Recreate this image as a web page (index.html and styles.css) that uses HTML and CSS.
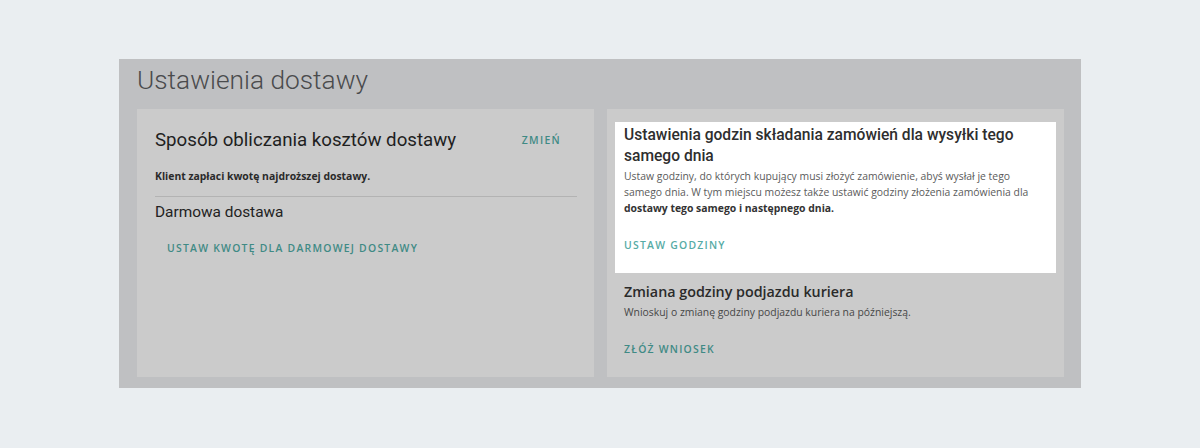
FILE: index.html
```html
<!DOCTYPE html>
<html lang="pl">
<head>
    <meta charset="UTF-8">
    <meta name="viewport" content="width=device-width, initial-scale=1.0">
    <title>Ustawienia dostawy</title>
    <link rel="stylesheet" href="styles.css">
</head>
<body>
    <div class="settings">
        <h1 class="page-title">Ustawienia dostawy</h1>
        <div class="cards">
            <div class="card card-left">
                <div class="card-head">
                    <h2 class="card-title">Sposób obliczania kosztów dostawy</h2>
                    <button class="link-btn link-change">Zmień</button>
                </div>
                <p class="summary">Klient zapłaci kwotę najdroższej dostawy.</p>
                <hr class="divider">
                <h3 class="sub-title">Darmowa dostawa</h3>
                <button class="link-btn link-free">Ustaw kwotę dla darmowej dostawy</button>
            </div>
            <div class="card card-right">
                <div class="spot">
                    <h3 class="spot-title">Ustawienia godzin składania zamówień dla wysyłki tego samego dnia</h3>
                    <p class="desc">Ustaw godziny, do których kupujący musi złożyć zamówienie, abyś wysłał je tego samego dnia. W tym miejscu możesz także ustawić godziny złożenia zamówienia dla <b>dostawy tego samego i następnego dnia.</b></p>
                    <button class="link-btn link-spot">Ustaw godziny</button>
                </div>
                <div class="section">
                    <h3 class="section-title">Zmiana godziny podjazdu kuriera</h3>
                    <p class="desc desc-dim">Wnioskuj o zmianę godziny podjazdu kuriera na późniejszą.</p>
                    <button class="link-btn link-request">Złóż wniosek</button>
                </div>
            </div>
        </div>
    </div>
</body>
</html>
```

FILE: styles.css
```css
body {
	margin: 0;
	padding: 0;
	background-color: #eaeef1;
	font-family: "Open Sans", "Liberation Sans", sans-serif;
}

.settings {
	box-sizing: border-box;
	width: 962px;
	height: 329px;
	margin: 59px 0 0 119px;
	padding: 0 17px 11px 18px;
	background-color: #bfc0c2;
	display: flex;
	flex-direction: column;
}

.page-title {
	margin: 0 0 12px;
	padding-top: 5px;
	font-family: Roboto, sans-serif;
	font-weight: 300;
	font-size: 26.3px;
	line-height: 33px;
	color: #4a4b4d;
}

.cards {
	flex: 1;
	display: grid;
	grid-template-columns: 1fr 1fr;
	gap: 13px;
}

.card {
	background-color: #cbcbcb;
}

.card-left {
	padding: 19px 17px 0 18px;
}

.card-head {
	display: flex;
	justify-content: space-between;
	align-items: center;
}

.card-title {
	margin: 0;
	font-family: Roboto, sans-serif;
	font-weight: 400;
	font-size: 18.7px;
	line-height: 24px;
	color: #1f1f1f;
}

.link-btn {
	border: 0;
	background: none;
	cursor: pointer;
	padding: 8px 12px;
	font-family: "Open Sans", sans-serif;
	font-weight: 600;
	font-size: 10.4px;
	line-height: 16px;
	letter-spacing: 1.25px;
	text-transform: uppercase;
	color: #3f8a85;
}

.link-change {
	margin-right: 16px;
	padding: 0;
	letter-spacing: 1.3px;
}

.summary {
	margin: 16px 0 0;
	font-size: 10.4px;
	line-height: 16px;
	font-weight: 700;
	color: #2a2a2a;
}

.divider {
	margin: 12px 0 0;
	border: 0;
	border-top: 1px solid #b3b3b3;
}

.sub-title {
	margin: 5px 0 0;
	font-family: Roboto, sans-serif;
	font-weight: 400;
	font-size: 15.4px;
	line-height: 20px;
	color: #222;
}

.link-free {
	margin-top: 10px;
}

.card-right {
	padding: 13px 8px 0;
}

.spot {
	background-color: #fff;
	padding: 3px 16px 12px 9px;
}

.spot-title {
	margin: 0;
	font-family: Roboto, sans-serif;
	font-weight: 500;
	font-size: 15.6px;
	line-height: 21px;
	color: #2e2e2e;
}

.desc {
	margin: 1px 0 0;
	font-size: 10.4px;
	line-height: 16px;
	color: #5b5b5b;
}

.desc b {
	color: #333;
}

.link-spot {
	margin-top: 13px;
	padding-left: 0;
	color: #56aba5;
}

.section {
	padding: 8px 9px 0;
}

.section-title {
	margin: 0;
	font-weight: 600;
	font-size: 14.3px;
	line-height: 22px;
	color: #2a2a2a;
}

.desc-dim {
	color: #474747;
}

.link-request {
	margin-top: 13px;
	padding-left: 0;
}
```
